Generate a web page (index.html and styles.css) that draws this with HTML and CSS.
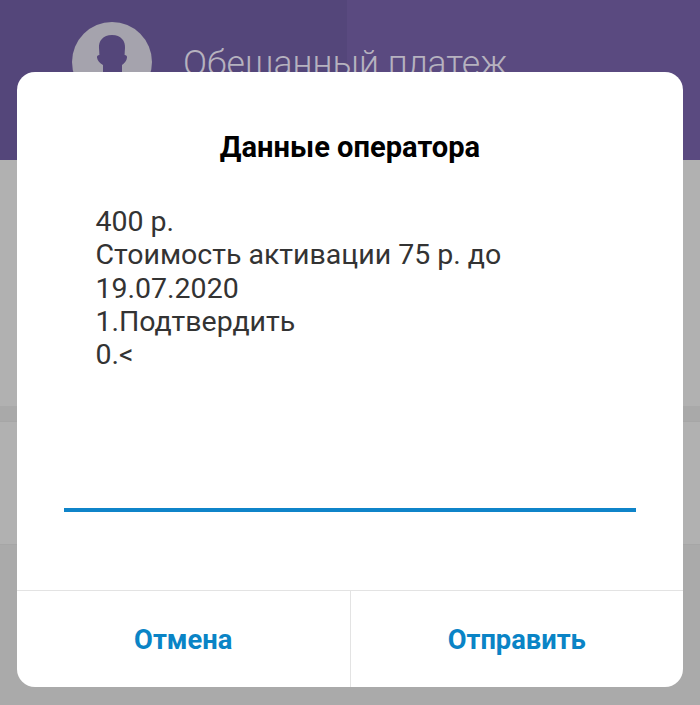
FILE: index.html
```html
<!DOCTYPE html>
<html lang="ru">
<head>
<meta charset="utf-8">
<title>Данные оператора</title>
<link rel="stylesheet" href="styles.css">
</head>
<body>
<div class="screen">
  <header class="header">
    <div class="avatar">
      <svg class="avatar-icon" viewBox="0 0 80 80" aria-hidden="true">
        <path d="M40 13C31 13 26.500 19 27 26C27.100 28.500 27.400 30.500 27.400 33C25.800 33.200 24.800 34 25 35.500C25.400 38.500 27.800 41.500 31 43L31 60L50 60L50 43C52.500 41.500 54.800 38.500 55 35.500C55.200 34 54.200 33.200 52.600 33C52.600 30.500 52.900 28.500 53 26C53.500 19 49 13 40 13Z"/>
      </svg>
    </div>
    <div class="header-title">Обещанный платеж</div>
  </header>
  <div class="rows">
    <div class="row row-a"></div>
    <div class="row row-b"></div>
    <div class="row row-c"></div>
    <div class="row row-d"></div>
  </div>
  <section class="dialog">
    <h1 class="dialog-title">Данные оператора</h1>
    <div class="dialog-body">
      <p class="message">400 р.<br>Стоимость активации 75 р. до<br>19.07.2020<br>1.Подтвердить<br>0.&lt;</p>
      <div class="input-line"></div>
    </div>
    <div class="actions">
      <div class="action">Отмена</div>
      <div class="action action-send">Отправить</div>
    </div>
  </section>
</div>
</body>
</html>
```

FILE: styles.css
```css
* { box-sizing: border-box; }
html, body { margin: 0; padding: 0; }
body { width: 700px; height: 705px; overflow: hidden; font-family: Roboto, "Liberation Sans", sans-serif; }
.screen { position: relative; width: 700px; height: 705px; background: #aaaaaa; overflow: hidden; display: flex; flex-direction: column; }
.header {
  height: 160px;
  background: linear-gradient(to right, #54467a 0, #54467a 347px, #5a4a80 347px);
  display: flex;
  align-items: flex-start;
  padding: 22px 0 0 72px;
  gap: 31px;
}
.avatar { width: 80px; height: 80px; border-radius: 50%; background: #a5a3ad; flex: none; }
.avatar-icon { display: block; width: 80px; height: 80px; fill: #54467a; }
.header-title { font-weight: 300; font-size: 35.500px; line-height: 40px; color: #b6b2bf; margin-top: 21px; white-space: nowrap; }
.rows { display: flex; flex-direction: column; }
.row-a { height: 247px; background: #b1b1b1; border-bottom: 1px solid #a9a9a9; }
.row-b { height: 15px; background: #a9a9a9; border-bottom: 1px solid #a6a6a6; }
.row-c { height: 123px; background: #b1b1b1; border-bottom: 1px solid #a6a6a6; }
.row-d { height: 160px; background: #aaaaaa; }
.dialog {
  position: absolute;
  left: 17px;
  top: 72px;
  width: 666px;
  height: 615px;
  background: #ffffff;
  border-radius: 18px;
  display: flex;
  flex-direction: column;
}
.dialog-title { margin: 59px 0 0; font-size: 29.100px; line-height: 32px; font-weight: 700; text-align: center; color: #000000; }
.dialog-body { flex: 1; padding: 42px 47px 0; display: flex; flex-direction: column; }
.message { margin: 0 0 0 31.500px; height: 303px; font-size: 28.500px; line-height: 33.300px; color: #333333; }
.input-line { height: 4px; background: #0f84c9; }
.actions { height: 97px; border-top: 1px solid #e3e3e3; display: flex; }
.action { flex: 1; display: flex; align-items: center; justify-content: center; padding-top: 1px; font-size: 27.300px; font-weight: 700; color: #0a84c6; }
.action-send { border-left: 1px solid #e3e3e3; }
```
